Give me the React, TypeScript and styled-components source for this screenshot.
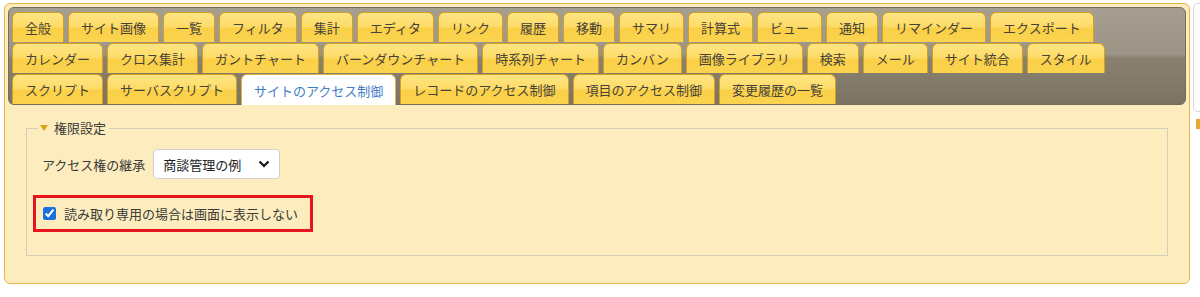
import styled, { createGlobalStyle } from "styled-components";

const GlobalStyle = createGlobalStyle`
  html, body {
    margin: 0;
    padding: 0;
    background: #fff;
  }
  body {
    font-family: "Noto Sans CJK JP", "Noto Sans", sans-serif;
    width: 1200px;
    height: 297px;
    overflow: hidden;
  }
`;

const Page = styled.div`
  display: flex;
  align-items: flex-start;
  gap: 3px;
  padding: 3px 0 0 4px;
  width: 1200px;
  box-sizing: border-box;
  overflow: hidden;
`;

const Panel = styled.div`
  width: 1186px;
  height: 281px;
  flex-shrink: 0;
  box-sizing: border-box;
  border: 1px solid #e7b647;
  border-radius: 6px;
  background: #fdedbe;
  padding: 3px;
  display: flex;
  flex-direction: column;
`;

const TabBar = styled.div`
  border: 1px solid #746c5d;
  border-radius: 6px;
  background: linear-gradient(
    #a69e91 0%,
    #9c9485 48%,
    #8a8171 52%,
    #7b7363 100%
  );
  padding: 4px 3px 0;
  display: flex;
  flex-direction: column;
  gap: 1px;
`;

const TabRow = styled.div`
  display: flex;
  align-items: flex-start;
  gap: 4px;
  height: 30px;
`;

const Tab = styled.div<{ $active?: boolean }>`
  height: ${(p) => (p.$active ? "31px" : "30px")};
  box-sizing: border-box;
  padding: 0 12px;
  border: 1px solid ${(p) => (p.$active ? "#e0b240" : "#d5a01f")};
  border-bottom: none;
  border-radius: 6px 6px 0 0;
  font-size: 13px;
  white-space: nowrap;
  display: flex;
  align-items: center;
  color: ${(p) => (p.$active ? "#3f7cc6" : "#46423a")};
  background: ${(p) =>
    p.$active
      ? "#ffffff"
      : "linear-gradient(#fee584 0%, #fddb66 48%, #fbd048 52%, #fbd34f 100%)"};
  position: relative;
  z-index: ${(p) => (p.$active ? 1 : 0)};
`;

const Fieldset = styled.fieldset`
  margin: 14px 18px 0 18px;
  border: 1px solid #d5cdbb;
  padding: 12px 0 23px 11px;
  min-width: 0;
`;

const Legend = styled.legend`
  padding: 0 3px 0 2px;
  font-size: 13px;
  line-height: 18px;
  color: #3a3a3a;
  display: flex;
  align-items: center;
  gap: 6px;
`;

const Body = styled.div`
  display: flex;
  flex-direction: column;
  align-items: flex-start;
  gap: 16px;
  padding-left: 4px;
`;

const FieldRow = styled.div`
  display: flex;
  align-items: center;
  gap: 8px;
  font-size: 13px;
  color: #3a3a3a;
`;

const Picker = styled.div`
  width: 127px;
  height: 30px;
  box-sizing: border-box;
  border: 1px solid #cfcfcf;
  border-radius: 4px;
  background: #fff;
  display: flex;
  align-items: center;
  justify-content: space-between;
  padding: 0 9px;
  font-size: 13px;
  color: #222;
`;

const Highlight = styled.label`
  margin-left: -9px;
  width: 280px;
  height: 37px;
  box-sizing: border-box;
  border: 3px solid #e8141e;
  display: flex;
  align-items: center;
  gap: 8px;
  padding-left: 7px;
  font-size: 13px;
  color: #3a3a3a;
`;

const Check = styled.input`
  width: 13px;
  height: 13px;
  margin: 0;
  accent-color: #1b6fde;
`;

const Side = styled.div`
  display: flex;
  flex-direction: column;
  gap: 7px;
  flex-shrink: 0;
  width: 12px;
`;

const SideBox = styled.div`
  height: 107px;
  border: 1px solid #d6d6d6;
  border-radius: 5px;
  background: #fff;
`;

const SideMark = styled.div`
  margin-left: 3px;
  width: 4px;
  height: 10px;
  background: #e8a92c;
`;

const rows: string[][] = [
  [
    "全般",
    "サイト画像",
    "一覧",
    "フィルタ",
    "集計",
    "エディタ",
    "リンク",
    "履歴",
    "移動",
    "サマリ",
    "計算式",
    "ビュー",
    "通知",
    "リマインダー",
    "エクスポート",
  ],
  [
    "カレンダー",
    "クロス集計",
    "ガントチャート",
    "バーンダウンチャート",
    "時系列チャート",
    "カンバン",
    "画像ライブラリ",
    "検索",
    "メール",
    "サイト統合",
    "スタイル",
  ],
  [
    "スクリプト",
    "サーバスクリプト",
    "サイトのアクセス制御",
    "レコードのアクセス制御",
    "項目のアクセス制御",
    "変更履歴の一覧",
  ],
];

const active = "サイトのアクセス制御";

export default function App() {
  return (
    <>
      <GlobalStyle />
      <Page>
        <Panel>
          <TabBar>
            {rows.map((row, i) => (
              <TabRow key={i}>
                {row.map((t) => (
                  <Tab key={t} $active={t === active}>
                    {t}
                  </Tab>
                ))}
              </TabRow>
            ))}
          </TabBar>
          <Fieldset>
            <Legend>
              <svg width="8" height="6" viewBox="0 0 8 6">
                <path d="M0 0 L8 0 L4 6 Z" fill="#d9a21c" />
              </svg>
              権限設定
            </Legend>
            <Body>
              <FieldRow>
                アクセス権の継承
                <Picker>
                  商談管理の例
                  <svg width="12" height="8" viewBox="0 0 12 8">
                    <path
                      d="M1.5 1.5 L6 6 L10.5 1.5"
                      fill="none"
                      stroke="#111"
                      strokeWidth="2.2"
                    />
                  </svg>
                </Picker>
              </FieldRow>
              <Highlight>
                <Check type="checkbox" defaultChecked />
                読み取り専用の場合は画面に表示しない
              </Highlight>
            </Body>
          </Fieldset>
        </Panel>
        <Side>
          <SideBox />
          <SideMark />
        </Side>
      </Page>
    </>
  );
}
